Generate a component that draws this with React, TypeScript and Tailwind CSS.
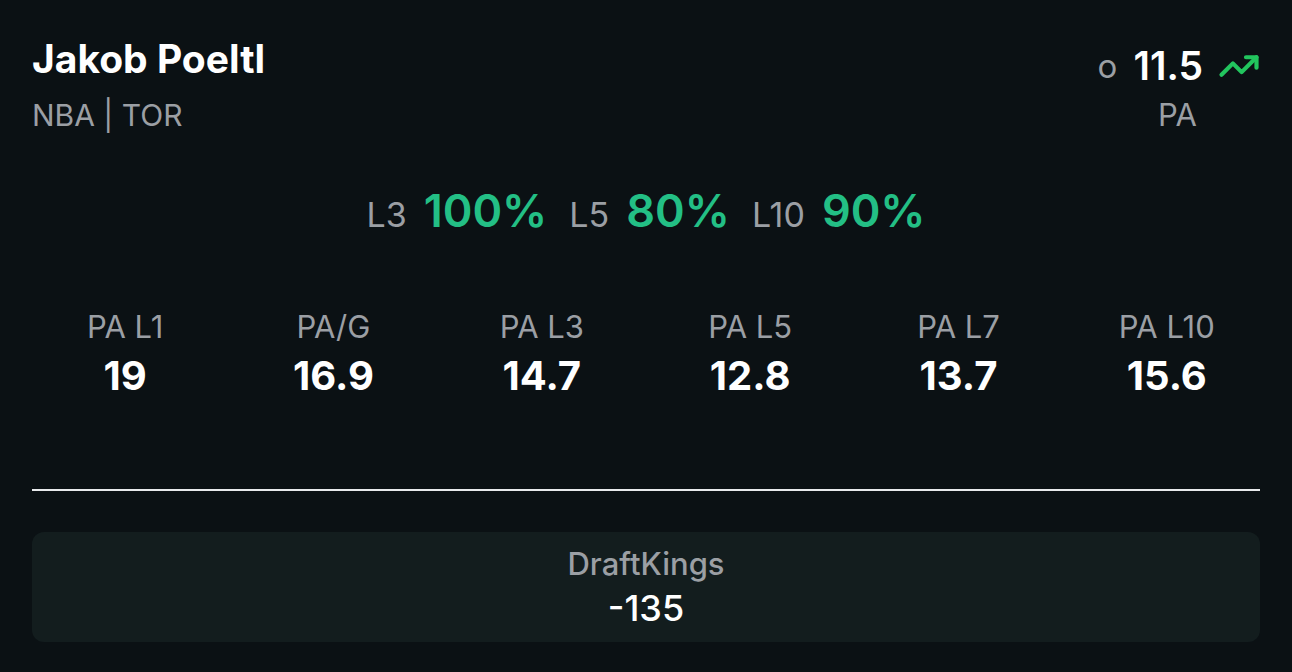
import { TrendingUp } from "lucide-react"

const HIT_RATES = [
  { label: "L3", value: "100%" },
  { label: "L5", value: "80%" },
  { label: "L10", value: "90%" },
]

const STATS = [
  { label: "PA L1", value: "19" },
  { label: "PA/G", value: "16.9" },
  { label: "PA L3", value: "14.7" },
  { label: "PA L5", value: "12.8" },
  { label: "PA L7", value: "13.7" },
  { label: "PA L10", value: "15.6" },
]

export default function App() {
  return (
    <div
      className="min-h-[672px] w-full bg-[#0b1114] px-8 pt-[35px] text-white"
      style={{ fontFamily: "Inter, 'Noto Sans', sans-serif" }}
    >
      {/* Header */}
      <div className="flex items-start justify-between">
        <div>
          <h1 className="text-[39px] font-bold leading-[48px]">Jakob Poeltl</h1>
          <p className="mt-[14px] text-[30px] leading-[36px] text-[#9b9fa4]">NBA | TOR</p>
        </div>
        <div className="mt-[7px] flex flex-col items-end">
          <div className="flex h-[48px] items-center">
            <span className="text-[33px] leading-[48px] text-[#9b9fa4]">o</span>
            <span className="ml-[16px] text-[39px] font-semibold leading-[48px]">11.5</span>
            <TrendingUp className="ml-[15px] size-[42px] text-[#22c55e]" strokeWidth={2.4} />
          </div>
          <p className="mr-[63px] mt-[7px] text-[31px] leading-[36px] text-[#9b9fa4]">PA</p>
        </div>
      </div>

      {/* Hit rates */}
      <div className="mt-[50px] flex h-[56px] items-baseline justify-center gap-[22px]">
        {HIT_RATES.map(({ label, value }) => (
          <div key={label} className="flex items-baseline gap-[17px]">
            <span className="text-[34px] leading-[56px] text-[#9b9fa4]">{label}</span>
            <span className="text-[45px] font-semibold leading-[56px] text-[#23bf85]">{value}</span>
          </div>
        ))}
      </div>

      {/* Stats grid */}
      <div className="-mx-[11px] mt-[69px] grid grid-cols-6">
        {STATS.map(({ label, value }) => (
          <div key={label} className="flex flex-col items-center">
            <span className="text-[31px] leading-[38px] text-[#9b9fa4]">{label}</span>
            <span className="mt-[6px] text-[40px] font-bold leading-[48px]">{value}</span>
          </div>
        ))}
      </div>

      <div className="mt-[89px] h-[2px] bg-[#e8eaec]" />

      {/* Sportsbook */}
      <div className="mt-[41px] flex h-[110px] flex-col items-center justify-center rounded-xl bg-[#131d1e]">
        <span className="text-[31px] font-medium leading-[38px] text-[#9b9fa4]">DraftKings</span>
        <span className="mt-[4px] text-[36px] font-medium leading-[42px]">-135</span>
      </div>
    </div>
  )
}
